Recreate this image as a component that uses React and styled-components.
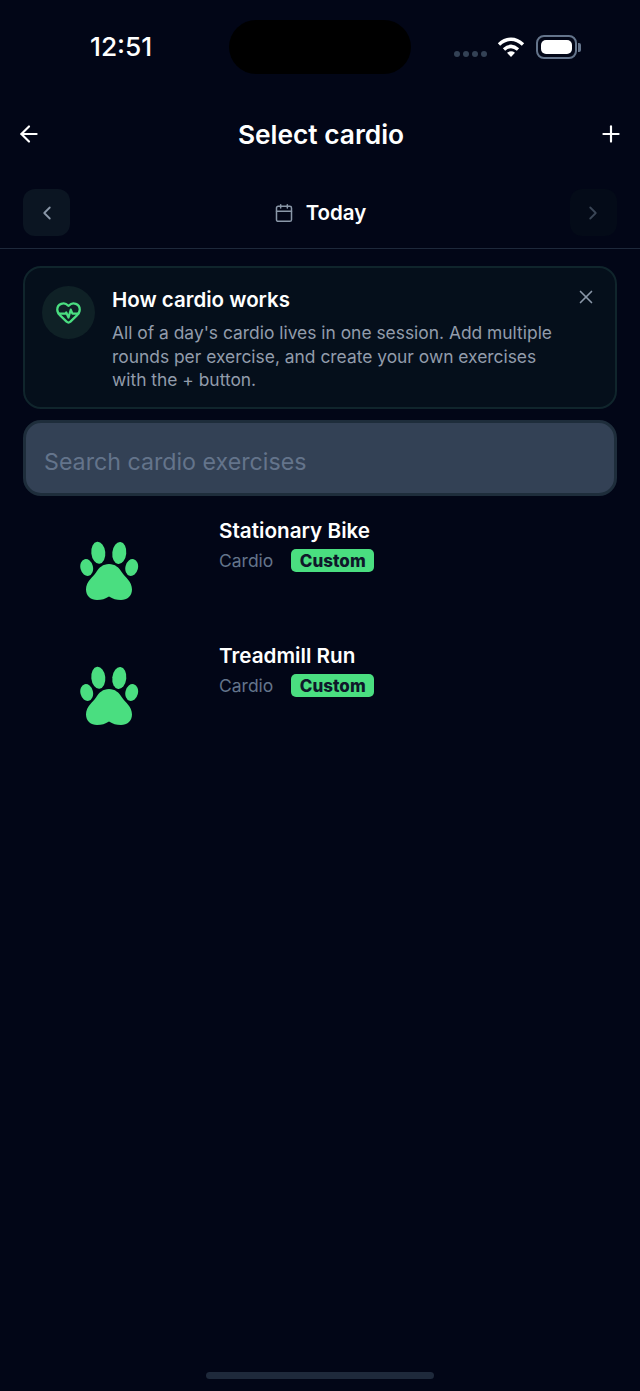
import styled, { createGlobalStyle } from 'styled-components';
import { ArrowLeft, Plus, ChevronLeft, ChevronRight, Calendar, HeartPulse, X } from 'lucide-react';

const exercises = ['Stationary Bike', 'Treadmill Run'];

const PawIcon = () => (
  <svg width="60" height="60" viewBox="0 0 60 60" fill="#4ade80">
    <ellipse cx="7.700" cy="26.500" rx="6.300" ry="8.500" transform="rotate(-14 7.700 26.500)" />
    <ellipse cx="52.700" cy="26.500" rx="6.300" ry="8.500" transform="rotate(14 52.700 26.500)" />
    <ellipse cx="19.300" cy="11.700" rx="7" ry="11" transform="rotate(-6 19.300 11.700)" />
    <ellipse cx="40.300" cy="12" rx="7" ry="11" transform="rotate(6 40.300 12)" />
    <path d="M30 23c-6 0-10 3.500-13 8.500-3 4.500-10 9-10 17 0 6.500 5 10.500 11 10.500 5 0 8-1 12-3.500 4 2.500 7 3.500 12 3.500 6 0 11-4 11-10.500 0-8-7-12.500-10-17-3-5-7-8.500-13-8.500z" />
  </svg>
);

export default function App() {
  return (
    <>
      <GlobalStyle />
      <Screen>
        <StatusBar>
          <Clock>12:51</Clock>
          <Island />
          <StatusIcons>
            <Dots>
              <Dot />
              <Dot />
              <Dot />
              <Dot />
            </Dots>
            <svg width="28" height="22" viewBox="0 0 28 22" fill="none" stroke="#fff" strokeWidth="3.4">
              <path d="M2 8.500C9.500 1.500 18.500 1.500 26 8.500" />
              <path d="M7 13.500c4.500-4 9.500-4 14 0" />
              <path d="M14 21l-4-4.300c2.500-1.800 5.500-1.800 8 0z" fill="#fff" stroke="none" />
            </svg>
            <Battery>
              <BatteryFill />
            </Battery>
            <BatteryCap />
          </StatusIcons>
        </StatusBar>

        <Header>
          <HeaderButton>
            <ArrowLeft size={26} strokeWidth={2} />
          </HeaderButton>
          <Title>Select cardio</Title>
          <HeaderButton>
            <Plus size={26} strokeWidth={2} />
          </HeaderButton>
        </Header>

        <DateBar>
          <DateButton>
            <ChevronLeft size={22} strokeWidth={2} color="#8a97a8" />
          </DateButton>
          <DateLabel>
            <Calendar size={20} strokeWidth={1.8} color="#8a97a8" />
            <DateText>Today</DateText>
          </DateLabel>
          <DateButton $disabled>
            <ChevronRight size={22} strokeWidth={2} color="#3a4656" />
          </DateButton>
        </DateBar>

        <Content>
          <InfoCard>
            <InfoBadge>
              <HeartPulse size={27} strokeWidth={2} color="#4ade80" />
            </InfoBadge>
            <InfoBody>
              <InfoTitle>How cardio works</InfoTitle>
              <InfoText>
                All of a day's cardio lives in one session. Add multiple rounds per exercise, and create your own
                exercises with the + button.
              </InfoText>
            </InfoBody>
            <CloseButton>
              <X size={22} strokeWidth={1.8} />
            </CloseButton>
          </InfoCard>

          <SearchBox>Search cardio exercises</SearchBox>

          <List>
            {exercises.map((name) => (
              <Row key={name}>
                <Thumb>
                  <PawIcon />
                </Thumb>
                <RowBody>
                  <RowName>{name}</RowName>
                  <RowMeta>
                    <Category>Cardio</Category>
                    <Tag>Custom</Tag>
                  </RowMeta>
                </RowBody>
              </Row>
            ))}
          </List>
        </Content>

        <HomeBar />
      </Screen>
    </>
  );
}

const GlobalStyle = createGlobalStyle`
  html, body {
    margin: 0;
    padding: 0;
    background: #020617;
  }
  * {
    box-sizing: border-box;
  }
`;

const Screen = styled.div`
  width: 640px;
  height: 1391px;
  position: relative;
  display: flex;
  flex-direction: column;
  overflow: hidden;
  background: #020617;
  color: #fff;
  font-family: Inter, 'Noto Sans', sans-serif;
`;

const StatusBar = styled.div`
  height: 74px;
  padding: 20px 60px 0 90px;
  display: flex;
  justify-content: space-between;
  align-items: flex-start;
`;

const Clock = styled.div`
  font-size: 26.300px;
  font-weight: 500;
  line-height: 54px;
  width: 139px;
  flex-shrink: 0;
`;

const Island = styled.div`
  width: 182px;
  height: 54px;
  flex-shrink: 0;
  border-radius: 27px;
  background: #000;
`;

const StatusIcons = styled.div`
  display: flex;
  align-items: center;
  height: 54px;
  margin-left: 43px;
  flex: 1;
`;

const Dots = styled.div`
  display: flex;
  gap: 3px;
  margin-top: 14px;
  margin-right: 10px;
`;

const Dot = styled.div`
  width: 6px;
  height: 6px;
  border-radius: 50%;
  background: #334155;
`;

const Battery = styled.div`
  width: 41px;
  height: 24px;
  margin-left: 11px;
  padding: 3px;
  flex-shrink: 0;
  border: 2px solid #64748b;
  border-radius: 8px;
`;

const BatteryFill = styled.div`
  width: 100%;
  height: 100%;
  border-radius: 5px;
  background: #fff;
`;

const BatteryCap = styled.div`
  width: 3px;
  height: 9px;
  margin-left: 1px;
  flex-shrink: 0;
  border-radius: 0 2px 2px 0;
  background: #64748b;
`;

const Header = styled.div`
  height: 72px;
  margin-top: 24px;
  padding: 0 16px;
  display: flex;
  align-items: center;
  justify-content: space-between;
`;

const HeaderButton = styled.div`
  width: 26px;
  height: 26px;
  color: #fff;
`;

const Title = styled.div`
  font-size: 26.300px;
  font-weight: 600;
  margin-left: 2px;
`;

const DateBar = styled.div`
  height: 79px;
  padding: 19px 23px 0;
  display: flex;
  align-items: flex-start;
  justify-content: space-between;
  border-bottom: 1px solid #1e293b;
`;

const DateButton = styled.div`
  width: 47px;
  height: 47px;
  border-radius: 12px;
  display: flex;
  align-items: center;
  justify-content: center;
  background: ${(props) => (props.$disabled ? '#040b18' : '#0b1522')};
`;

const DateLabel = styled.div`
  height: 47px;
  display: flex;
  align-items: center;
  gap: 12px;
`;

const DateText = styled.div`
  font-size: 20.500px;
  font-weight: 600;
`;

const Content = styled.div`
  padding: 17px 23px 0;
  display: flex;
  flex-direction: column;
`;

const InfoCard = styled.div`
  height: 143px;
  padding: 18px 18px 0 17px;
  display: flex;
  align-items: flex-start;
  border: 2px solid #10252c;
  border-radius: 18px;
  background: #050f1b;
`;

const InfoBadge = styled.div`
  width: 53px;
  height: 53px;
  flex-shrink: 0;
  border-radius: 50%;
  display: flex;
  align-items: center;
  justify-content: center;
  background: #0f2126;
`;

const InfoBody = styled.div`
  margin-left: 17px;
  flex: 1;
`;

const InfoTitle = styled.div`
  font-size: 20.500px;
  font-weight: 600;
  line-height: 28px;
`;

const InfoText = styled.div`
  margin-top: 7px;
  font-size: 17.400px;
  line-height: 23.500px;
  color: #929cab;
`;

const CloseButton = styled.div`
  width: 22px;
  height: 22px;
  margin-left: 12px;
  color: #8a97a8;
`;

const SearchBox = styled.div`
  height: 76px;
  margin-top: 11px;
  padding: 8px 0 0 18px;
  display: flex;
  align-items: center;
  border: 3px solid #1e2d3b;
  border-radius: 18px;
  background: #334155;
  color: #64748b;
  font-size: 23.200px;
`;

const List = styled.div`
  margin-top: 15px;
  display: flex;
  flex-direction: column;
`;

const Row = styled.div`
  height: 125px;
  display: flex;
  align-items: flex-start;
`;

const Thumb = styled.div`
  width: 196px;
  padding: 30px 0 0 56px;
  flex-shrink: 0;
`;

const RowBody = styled.div`
  padding-top: 4px;
  display: flex;
  flex-direction: column;
`;

const RowName = styled.div`
  font-size: 20.700px;
  font-weight: 600;
  line-height: 32px;
`;

const RowMeta = styled.div`
  margin-top: 2px;
  display: flex;
  align-items: center;
  gap: 18px;
`;

const Category = styled.div`
  font-size: 17.500px;
  color: #64748b;
`;

const Tag = styled.div`
  height: 23px;
  padding: 0 8.500px;
  display: flex;
  align-items: center;
  border-radius: 5px;
  background: #4ade80;
  color: #0f172a;
  font-size: 17px;
  font-weight: 800;
`;

const HomeBar = styled.div`
  position: absolute;
  left: 206px;
  bottom: 12px;
  width: 228px;
  height: 7px;
  border-radius: 4px;
  background: #1e293b;
`;
